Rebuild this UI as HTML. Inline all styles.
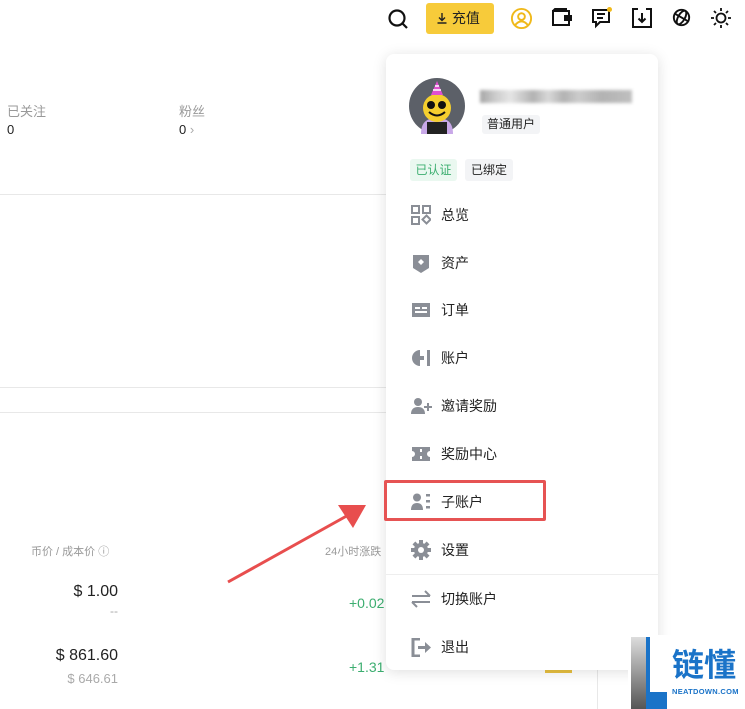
<!DOCTYPE html>
<html><head><meta charset="utf-8"><style>
*{margin:0;padding:0;box-sizing:border-box}
body{width:745px;height:709px;overflow:hidden;background:#fff;position:relative;font-family:"Liberation Sans","Noto Sans CJK SC",sans-serif;color:#222}
.a{position:absolute}
.hl{position:absolute;height:1px;background:#e8e8e8}
.menu{position:absolute;left:386px;top:54px;width:272px;height:616px;background:#fff;border-radius:8px;box-shadow:0 2px 14px rgba(0,0,0,.13)}
.it{position:absolute;left:441px;font-size:14px;color:#222;line-height:16px}
.ic{position:absolute;left:411px}
.g{color:#3cae70}
</style></head><body>
<div class="a" style="left:7px;top:101px;font-size:13px;color:#999">已关注</div>
<div class="a" style="left:7px;top:122px;font-size:13px">0</div>
<div class="a" style="left:179px;top:101px;font-size:13px;color:#999">粉丝</div>
<div class="a" style="left:179px;top:122px;font-size:13px">0 <span style="color:#aaa">›</span></div>
<div class="hl" style="left:0;top:194px;width:386px"></div>
<div class="hl" style="left:0;top:387px;width:386px"></div>
<div class="hl" style="left:0;top:412px;width:386px"></div>
<div class="a" style="left:31px;top:543px;font-size:11px;color:#999">币价 / 成本价 ⓘ</div>
<div class="a" style="left:325px;top:543px;font-size:11px;color:#999">24小时涨跌</div>
<div class="a" style="left:0;width:118px;text-align:right;top:583px;font-size:16px">$ 1.00</div>
<div class="a" style="left:0;width:118px;text-align:right;top:604px;font-size:12px;color:#aaa">--</div>
<div class="a" style="left:0;width:118px;text-align:right;top:647px;font-size:16px">$ 861.60</div>
<div class="a" style="left:0;width:118px;text-align:right;top:671px;font-size:13px;color:#aaa">$ 646.61</div>
<div class="a g" style="left:349px;top:595px;font-size:14px">+0.02</div>
<div class="a g" style="left:349px;top:659px;font-size:14px">+1.31</div>
<div class="a" style="left:545px;top:670px;width:27px;height:3px;background:#e8c040"></div>
<div class="a" style="left:597px;top:650px;width:1px;height:59px;background:#e8e8e8"></div>

<svg class="a" style="left:386px;top:7px" width="24" height="24" viewBox="0 0 24 24" fill="none" stroke="#111" stroke-width="2.2"><circle cx="11" cy="11" r="7.5"/><path d="M16.5 16.5l4.5 4.5"/></svg>
<div class="a" style="left:426px;top:3px;width:68px;height:31px;background:#f7cb3a;border-radius:3px;font-size:14px;line-height:31px;padding-left:10px">
<svg width="12" height="12" viewBox="0 0 12 12" style="vertical-align:-1px" fill="none" stroke="#222" stroke-width="1.4"><path d="M6 1v7M3 5.5L6 8.5 9 5.5M1.5 11h9"/></svg> 充值</div>
<svg class="a" style="left:510px;top:7px" width="23" height="23" viewBox="0 0 24 24" fill="none" stroke="#f0b91a" stroke-width="2"><circle cx="12" cy="12" r="10"/><circle cx="12" cy="10" r="3.5"/><path d="M5.5 19c2-3 4-4 6.5-4s4.5 1 6.5 4"/></svg>
<svg class="a" style="left:551px;top:8px" width="22" height="20" viewBox="0 0 22 20" fill="none" stroke="#111" stroke-width="2"><path d="M2 3h16v14H2z M2 3l2-2h12"/><rect x="14" y="8" width="6" height="4" fill="#111"/></svg>
<svg class="a" style="left:591px;top:7px" width="22" height="22" viewBox="0 0 22 22" fill="none" stroke="#111" stroke-width="2"><path d="M2 3h16v12H9l-4 4v-4H2z M6 7h8M6 11h6"/><circle cx="18.5" cy="2.5" r="2.5" fill="#f0b91a" stroke="none"/></svg>
<svg class="a" style="left:631px;top:7px" width="22" height="22" viewBox="0 0 22 22" fill="none" stroke="#111" stroke-width="2"><path d="M7 2H2v18h18V2h-5M11 6v9M7.5 11.5L11 15l3.5-3.5"/></svg>
<svg class="a" style="left:670px;top:6px" width="23" height="23" viewBox="0 0 24 24" fill="none" stroke="#111" stroke-width="2"><circle cx="12" cy="12" r="8"/><ellipse cx="12" cy="12" rx="3.5" ry="8" transform="rotate(30 12 12)"/><path d="M4 12h16" transform="rotate(30 12 12)"/></svg>
<svg class="a" style="left:710px;top:7px" width="22" height="22" viewBox="0 0 22 22" fill="none" stroke="#111" stroke-width="1.8"><circle cx="11" cy="11" r="4.5"/><path d="M11 1v3M11 18v3M1 11h3M18 11h3M4 4l2 2M16 16l2 2M4 18l2-2M16 6l2-2"/></svg>

<div class="menu"></div>
<svg class="a" style="left:409px;top:78px" width="56" height="56" viewBox="0 0 56 56"><circle cx="28" cy="28" r="28" fill="#5c6068"/><path d="M12 56c0-10 4-16 16-16s16 6 16 16z" fill="#c8a8e8"/><path d="M18 56v-12h20v12z" fill="#222"/><circle cx="28" cy="30" r="14" fill="#f5cf2e"/><circle cx="22" cy="27" r="4" fill="#111"/><circle cx="33" cy="27" r="4" fill="#111"/><path d="M20 34q8 7 16 0" stroke="#111" stroke-width="2" fill="none"/><path d="M22 17l6-14 6 14z" fill="#e050d0"/><path d="M24 12h8M26 8h4" stroke="#fff" stroke-width="1.5"/></svg>
<div class="a" style="left:480px;top:90px;width:152px;height:13px;background:linear-gradient(90deg,#888 0,#bbb 10%,#ddd 20%,#999 35%,#ccc 45%,#999 55%,#bbb 65%,#999 80%,#aaa 100%);filter:blur(1.5px);opacity:.75"></div>
<div class="a" style="left:482px;top:115px;width:58px;height:19px;background:#f3f4f6;border-radius:3px;font-size:12px;line-height:19px;text-align:center">普通用户</div>
<div class="a" style="left:410px;top:159px;width:47px;height:22px;background:#eaf8f0;border-radius:3px;font-size:12px;line-height:22px;text-align:center;color:#3cae70">已认证</div>
<div class="a" style="left:465px;top:159px;width:48px;height:22px;background:#f3f4f6;border-radius:3px;font-size:12px;line-height:22px;text-align:center">已绑定</div>

<svg class="ic" style="top:205px" width="20" height="20" viewBox="0 0 20 20" fill="none" stroke="#8a8e96" stroke-width="2"><rect x="1" y="1" width="7" height="7"/><rect x="12" y="1" width="7" height="7"/><rect x="1" y="12" width="7" height="7"/><path d="M15.5 10.5l4 4-4 4-4-4z"/></svg><div class="it" style="top:207px">总览</div>
<svg class="ic" style="top:254px" width="20" height="19" viewBox="0 0 20 19"><path d="M2 1h16v13l-8 5-8-5z" fill="#8a8e96"/><path d="M10 5l3 3-3 3-3-3z" fill="#fff"/></svg><div class="it" style="top:255px">资产</div>
<svg class="ic" style="top:302px" width="20" height="16" viewBox="0 0 20 16"><rect x="1" y="1" width="18" height="14" fill="#8a8e96"/><rect x="4" y="5" width="5" height="2" fill="#fff"/><rect x="11" y="5" width="5" height="2" fill="#fff"/><rect x="4" y="9" width="12" height="2" fill="#fff"/></svg><div class="it" style="top:302px">订单</div>
<svg class="ic" style="top:349px" width="20" height="18" viewBox="0 0 20 18"><path d="M9 1a8 8 0 1 0 0 16V11h4V7H9z" fill="#8a8e96"/><rect x="16" y="1" width="3" height="16" fill="#8a8e96"/></svg><div class="it" style="top:350px">账户</div>
<svg class="ic" style="top:397px" width="22" height="18" viewBox="0 0 22 18" fill="#8a8e96"><circle cx="7" cy="5" r="4"/><path d="M0 17c0-5 3-7 7-7s7 2 7 7z"/><path d="M16 6h2v3h3v2h-3v3h-2v-3h-3V9h3z"/></svg><div class="it" style="top:398px">邀请奖励</div>
<svg class="ic" style="top:446px" width="20" height="16" viewBox="0 0 20 16" fill="#8a8e96"><path d="M1 1h18v4a3 3 0 0 0 0 6v4H1v-4a3 3 0 0 0 0-6z"/><rect x="9" y="3" width="2" height="3" fill="#fff"/><rect x="9" y="10" width="2" height="3" fill="#fff"/></svg><div class="it" style="top:446px">奖励中心</div>
<div class="a" style="left:384px;top:480px;width:162px;height:41px;border:3px solid #e65353;border-radius:2px"></div>
<svg class="ic" style="top:493px" width="20" height="17" viewBox="0 0 20 17" fill="#8a8e96"><circle cx="6" cy="4.5" r="4"/><path d="M0 17c0-5 2.5-7 6-7s6 2 6 7z"/><rect x="15" y="1" width="4" height="2.5"/><rect x="15" y="7" width="4" height="2.5"/><rect x="15" y="13" width="4" height="2.5"/></svg><div class="it" style="top:494px">子账户</div>
<svg class="ic" style="top:540px" width="20" height="20" viewBox="0 0 20 20"><g fill="#8a8e96"><circle cx="10" cy="10" r="7"/><rect x="8" y="0" width="4" height="20"/><rect x="8" y="0" width="4" height="20" transform="rotate(45 10 10)"/><rect x="8" y="0" width="4" height="20" transform="rotate(90 10 10)"/><rect x="8" y="0" width="4" height="20" transform="rotate(135 10 10)"/></g><circle cx="10" cy="10" r="3" fill="#fff"/></svg><div class="it" style="top:542px">设置</div>
<div class="hl" style="left:386px;top:574px;width:272px;background:#eee"></div>
<svg class="ic" style="top:590px" width="20" height="18" viewBox="0 0 20 18" fill="none" stroke="#8a8e96" stroke-width="2"><path d="M1 6h18M14 1l5 5M19 12H1M6 17l-5-5"/></svg><div class="it" style="top:591px">切换账户</div>
<svg class="ic" style="top:638px" width="20" height="19" viewBox="0 0 20 19"><path d="M9 1H2v17h7" fill="none" stroke="#8a8e96" stroke-width="3"/><path d="M7 8h7V4l6 5.5-6 5.5v-4H7z" fill="#8a8e96"/></svg><div class="it" style="top:639px">退出</div>

<svg class="a" style="left:220px;top:495px" width="160" height="95" viewBox="0 0 160 95"><path d="M8 87L132 18" stroke="#e84e4e" stroke-width="3"/><path d="M146 10L118 10L133 33z" fill="#e84e4e"/></svg>

<div class="a" style="left:628px;top:635px;width:117px;height:74px;background:#fff"></div>
<svg class="a" style="left:631px;top:637px" width="36" height="72" viewBox="0 0 36 72"><path d="M0 0h15v72H0z" fill="url(#gr)"/><path d="M15 0l4 0v55h17v17H15z" fill="#1a73c8"/><defs><linearGradient id="gr" x1="0" y1="0" x2="0" y2="1"><stop offset="0" stop-color="#ddd"/><stop offset="1" stop-color="#555"/></linearGradient></defs></svg>
<div class="a" style="left:672px;top:648px;font-size:32px;line-height:34px;color:#1a73c8;font-weight:bold">链懂</div>
<div class="a" style="left:672px;top:687px;font-size:7.5px;color:#1a73c8;letter-spacing:.3px;font-weight:bold">NEATDOWN.COM</div>
</body></html>
